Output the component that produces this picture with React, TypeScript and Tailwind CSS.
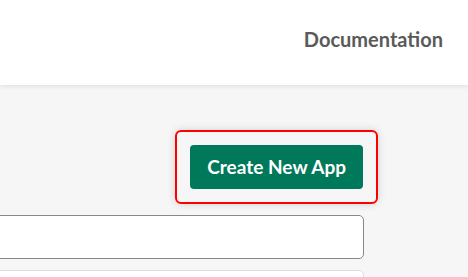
export default function App() {
  return (
    <div className="h-screen bg-[#f6f6f6] font-['Lato',sans-serif] overflow-hidden">
      <header className="h-[85px] bg-white shadow-[0_2px_4px_rgba(0,0,0,0.08)] flex items-center justify-end pr-[25px]">
        <a className="text-[20px] font-bold text-[#5a5a5a] mb-[8px]">Documentation</a>
      </header>
      <main className="w-[364px] pt-[45px]">
        <div className="flex justify-end">
          <div className="mr-[-14px] p-[13px] rounded-[6px] border-2 border-[#ff0000] shadow-[0_0_8px_rgba(0,0,0,0.15)]">
            <button className="h-[44px] px-[17px] rounded-[4px] bg-[#00785a] text-white text-[19px] font-bold">
              Create New App
            </button>
          </div>
        </div>
        <div className="mt-[11px] h-[44px] bg-white border border-[#888] rounded-[5px] ml-[-10px]" />
        <div className="mt-[11px] h-[44px] bg-white border border-[#ddd] rounded-[5px] ml-[-10px]" />
      </main>
    </div>
  );
}
